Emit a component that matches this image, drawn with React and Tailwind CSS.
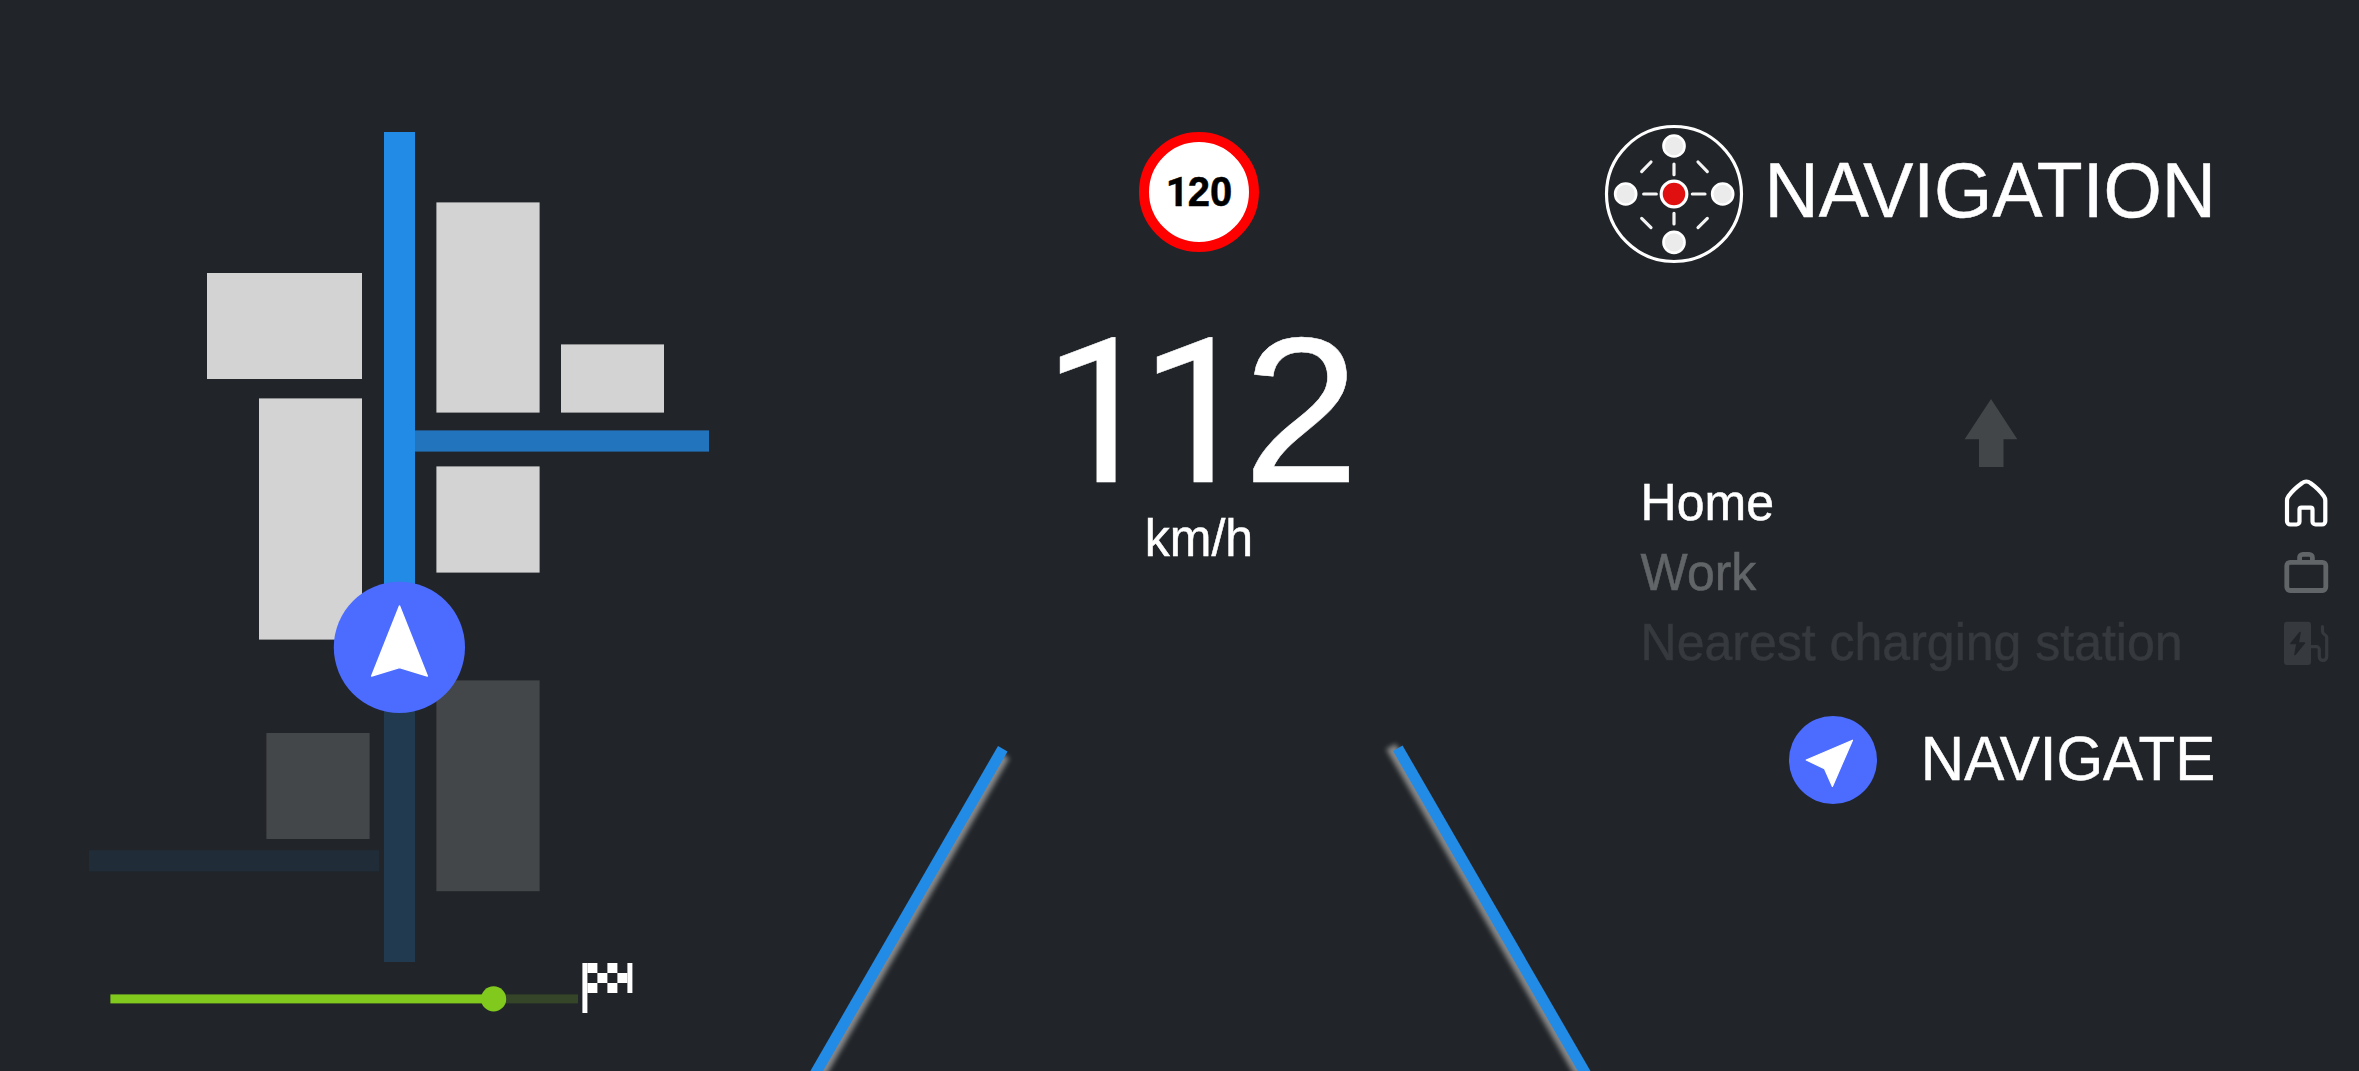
const LIT = "#d3d3d3";
const DIM = "#444749";

function RouteMap() {
  return (
    <svg className="h-[1071px] w-[798px] shrink-0" viewBox="0 0 798 1071">
      <rect x="415" y="430.4" width="294" height="21.2" fill="#2275bd" />
      <rect x="384" y="132" width="31" height="516" fill="#228be6" />
      <rect x="384" y="648" width="31" height="314" fill="#213a4f" />
      <rect x="89" y="850.2" width="290" height="21.2" fill="#202c37" />

      <rect x="436.4" y="202.4" width="103.2" height="210.2" fill={LIT} />
      <rect x="207" y="273" width="155" height="106" fill={LIT} />
      <rect x="561" y="344.4" width="103" height="68.2" fill={LIT} />
      <rect x="259" y="398.4" width="103" height="241.2" fill={LIT} />
      <rect x="436.4" y="466.4" width="103.2" height="106.2" fill={LIT} />
      <rect x="436.4" y="680.4" width="103.2" height="210.8" fill={DIM} />
      <rect x="266.4" y="733" width="103.2" height="106" fill={DIM} />

      <circle cx="399.4" cy="647.3" r="65.6" fill="#4c6cff" />
      <path
        d="M399.5 606 L427.3 676 L399.5 667.6 L371.7 676 Z"
        fill="#fff"
        stroke="#fff"
        strokeWidth="1.5"
        strokeLinejoin="round"
      />

      <rect x="110.4" y="994.4" width="383" height="9" fill="#82c91e" />
      <rect x="493.4" y="994.4" width="84.6" height="9" fill="#354528" />
      <circle cx="493.6" cy="998.9" r="12.6" fill="#82c91e" />

      <g fill="#fff">
        <path d="M582.4 963h5v50h-5z" />
        <path d="M587.4 963h10v10h-10zM607.4 963h10v10h-10z" />
        <path d="M597.4 973h10v10h-10zM617.4 973h10v10h-10z" />
        <path d="M587.4 983h10v10h-10zM607.4 983h10v10h-10z" />
        <path d="M627.4 963h5v30h-5z" />
      </g>
    </svg>
  );
}

function SpeedPanel() {
  return (
    <section className="relative flex h-full w-[802px] shrink-0 flex-col items-center overflow-hidden pt-[132px]">
      <div className="flex size-[120px] items-center justify-center rounded-full border-10 border-[#ff0000] bg-white">
        <div className="text-[40px] leading-none font-bold whitespace-nowrap text-black">
          <span className="font-[Roboto] leading-[0] tracking-[-0.8px]">1</span>
          <span className="inline-block origin-[50%_84.65%] scale-y-[1.04]">20</span>
        </div>
      </div>
      <div className="mt-[61px] h-[200px] text-[200px] leading-none whitespace-nowrap">
        <span className="font-[Roboto] text-[202px] leading-[0] tracking-[-16.6px]">11</span>
        <span className="ml-[6.2px] inline-block origin-[0%_84.65%] scale-x-[1.045] scale-y-[1.035]">2</span>
      </div>
      <div className="mt-px origin-[50%_84.65%] scale-y-[1.02] text-[50px] leading-none">km/h</div>
      {/* lane markings */}
      <div className="absolute top-[746px] left-[199.5px] h-[420px] w-[11px] origin-top-left rotate-[30deg] bg-[#228be6] shadow-[5px_5px_5px_#888]" />
      <div className="absolute top-[751px] left-[594.5px] h-[420px] w-[11px] origin-top-left -rotate-[30deg] bg-[#228be6] shadow-[-5px_-5px_5px_#888]" />
    </section>
  );
}

function DialIcon() {
  return (
    <svg className="size-[150px] shrink-0" viewBox="0 0 450 450">
      <circle cx="222" cy="222" r="202.5" fill="none" stroke="#fff" strokeWidth="9.5" />
      <g fill="#ebebeb" stroke="#fff" strokeWidth="8">
        <circle cx="222" cy="78" r="31.5" />
        <circle cx="222" cy="367" r="31.5" />
        <circle cx="77" cy="222" r="31.5" />
        <circle cx="368" cy="222" r="31.5" />
      </g>
      <circle cx="222" cy="222" r="38.5" fill="#e01010" stroke="#fff" strokeWidth="9.5" />
      <g stroke="#f4f4f4" strokeWidth="9.5" strokeLinecap="round">
        <path d="M222 132v32M222 280v32M131 222h38M277 222h38" />
        <path d="M153 126l-28 29M294 126l28 29M125 295l28 28M322 295l-28 28" />
      </g>
    </svg>
  );
}

function HomeIcon() {
  return (
    <svg className="size-[50px]" viewBox="0 0 50 50" fill="none" stroke="currentColor" strokeWidth="4.2">
      <path d="M9.3 46.5h6.2a3 3 0 0 0 3-3V31.7a2 2 0 0 1 2-2h9a2 2 0 0 1 2 2v11.8a3 3 0 0 0 3 3H41a3.3 3.3 0 0 0 3.3-3.3V22.5c0-1.9-.4-2.9-1.4-4.3C39.5 13.4 34 8.3 29.4 5a6.4 6.4 0 0 0-8.2 0C16.6 8.3 10.9 13.4 7.4 18.2C6.4 19.6 6 20.6 6 22.5v20.7a3.3 3.3 0 0 0 3.3 3.3z" />
    </svg>
  );
}

function WorkIcon() {
  return (
    <svg className="size-[50px]" viewBox="0 0 50 50" fill="none" stroke="currentColor" strokeWidth="4.8">
      <rect x="5.8" y="14.3" width="39" height="28.2" rx="3.4" />
      <path d="M18.6 14.3V9.6a3.3 3.3 0 0 1 3.3-3.3h6.2a3.3 3.3 0 0 1 3.3 3.3v4.7" />
    </svg>
  );
}

function ChargerIcon() {
  return (
    <svg className="size-[50px]" viewBox="0 0 50 50" fill="none">
      <rect x="3" y="3.7" width="27" height="43.3" rx="3" fill="currentColor" />
      <path
        d="M19 14.5L10 25.5h6L14 36.5L23.4 25h-6.2z"
        fill="#212529"
        stroke="#212529"
        strokeWidth="1.6"
        strokeLinejoin="round"
      />
      <path
        d="M30 28.7h5.3a3 3 0 0 1 3 3v7a3.7 3.7 0 0 0 7.4 0V19c0-2.2-4.2-2.4-4.2-5.5V8.6"
        stroke="currentColor"
        strokeWidth="3.2"
        strokeLinecap="round"
      />
    </svg>
  );
}

const DESTINATIONS = [
  { name: "Home", Icon: HomeIcon, tone: "text-white" },
  { name: "Work", Icon: WorkIcon, tone: "text-[#626568]" },
  { name: "Nearest charging station", Icon: ChargerIcon, tone: "text-[#363a3e]" },
];

function NavigationPanel() {
  return (
    <section className="flex h-full w-[759px] shrink-0 flex-col pt-[120px]">
      <header className="flex items-start">
        <DialIcon />
        <h1 className="mt-[33.5px] ml-[14.6px] origin-[50%_84.65%] scale-y-[1.04] text-[75px] leading-none">
          NAVIGATION
        </h1>
      </header>

      <svg className="mt-[129px] ml-[364px] h-[68px] w-[54px]" viewBox="0 0 54 68">
        <path d="M27 0L53.3 40.2H39.5V68H15V40.2H.6z" fill="#424648" />
      </svg>

      <ul className="mt-px mr-7 ml-[40.6px]">
        {DESTINATIONS.map(({ name, Icon, tone }) => (
          <li key={name} className={`flex h-[70px] items-center justify-between ${tone}`}>
            <span className="origin-[50%_84.65%] scale-y-[1.03] text-[50px] leading-none">{name}</span>
            <Icon />
          </li>
        ))}
      </ul>

      <button className="mt-[38px] ml-[189px] flex items-center">
        <svg className="size-[88px]" viewBox="0 0 88 88">
          <circle cx="44" cy="44" r="44" fill="#4c6cff" />
          <path
            d="M63.5 24.2L43.4 70.4L35.4 52.6L17.2 44z"
            fill="#fff"
            stroke="#fff"
            strokeWidth="1.2"
            strokeLinejoin="round"
          />
        </svg>
        <span className="ml-[43.8px] origin-[50%_84.65%] scale-y-[1.04] text-[60px] leading-none">NAVIGATE</span>
      </button>
    </section>
  );
}

export default function App() {
  return (
    <main className="flex h-[1071px] w-[2359px] overflow-hidden bg-[#212529] font-['Liberation_Sans',Arial,sans-serif] text-white [-webkit-text-stroke:0.5px]">
      <RouteMap />
      <SpeedPanel />
      <NavigationPanel />
    </main>
  );
}
